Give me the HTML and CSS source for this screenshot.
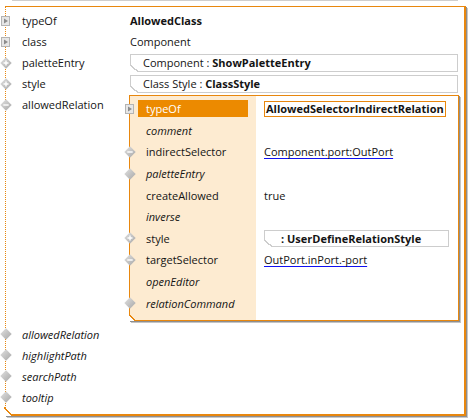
FILE: index.html
```html
<!DOCTYPE html>
<html>
<head>
<meta charset="utf-8">
<link rel="stylesheet" href="styles.css">
</head>
<body>
<svg class="defs" width="0" height="0" aria-hidden="true">
  <defs>
    <linearGradient id="dg" x1="0" y1="0" x2="1" y2="1">
      <stop offset="0" stop-color="#e2e2e2"/>
      <stop offset="1" stop-color="#a6a6a6"/>
    </linearGradient>
    <symbol id="i-arrow" viewBox="0 0 10 10">
      <rect x="0.5" y="0.5" width="8" height="9" fill="#e6e6e6" stroke="#b4b4b4"/>
      <polygon points="3,2.5 7,5 3,7.5" fill="#8c8c8c"/>
    </symbol>
    <symbol id="i-diamond" viewBox="0 0 12 12">
      <polygon points="6,0.3 11.7,6 6,11.7 0.3,6" fill="url(#dg)"/>
    </symbol>
    <symbol id="i-plus" viewBox="0 0 12 12">
      <polygon points="6,0.3 11.7,6 6,11.7 0.3,6" fill="url(#dg)"/>
      <path d="M3.5 6H8.5M6 3.5V8.5" stroke="#fff" stroke-width="1.4"/>
    </symbol>
    <symbol id="i-minus" viewBox="0 0 12 12">
      <polygon points="6,0.3 11.7,6 6,11.7 0.3,6" fill="url(#dg)"/>
      <path d="M3.3 6H8.7" stroke="#fff" stroke-width="1.4"/>
    </symbol>
  </defs>
</svg>

<div class="edge edge-top"></div>

<div class="panel">
  <div class="orow">
    <span class="ico"><svg class="sq"><use href="#i-arrow"/></svg></span>
    <span class="olabel">typeOf</span>
    <span class="ovalue strong">AllowedClass</span>
  </div>
  <div class="orow">
    <span class="ico"><svg class="sq"><use href="#i-arrow"/></svg></span>
    <span class="olabel">class</span>
    <span class="ovalue">Component</span>
  </div>
  <div class="orow">
    <span class="ico"><svg class="dm"><use href="#i-plus"/></svg></span>
    <span class="olabel">paletteEntry</span>
    <span class="ovalue"><span class="refbox">Component : <b>ShowPaletteEntry</b></span></span>
  </div>
  <div class="orow">
    <span class="ico"><svg class="dm"><use href="#i-plus"/></svg></span>
    <span class="olabel">style</span>
    <span class="ovalue"><span class="refbox">Class Style : <b>ClassStyle</b></span></span>
  </div>
  <div class="orow orow-nested">
    <span class="ico"><svg class="dm"><use href="#i-minus"/></svg></span>
    <span class="olabel">allowedRelation</span>
    <div class="ovalue">
      <div class="inner">
        <div class="irow">
          <span class="ico"><svg class="sq"><use href="#i-arrow"/></svg></span>
          <span class="ilabel selected">typeOf</span>
          <span class="ivalue"><span class="typebox">AllowedSelectorIndirectRelation</span></span>
        </div>
        <div class="irow">
          <span class="ico"></span>
          <span class="ilabel empty">comment</span>
          <span class="ivalue"></span>
        </div>
        <div class="irow">
          <span class="ico"><svg class="dm"><use href="#i-minus"/></svg></span>
          <span class="ilabel">indirectSelector</span>
          <span class="ivalue"><span class="link">Component.port:OutPort</span></span>
        </div>
        <div class="irow">
          <span class="ico"><svg class="dm"><use href="#i-diamond"/></svg></span>
          <span class="ilabel empty">paletteEntry</span>
          <span class="ivalue"></span>
        </div>
        <div class="irow">
          <span class="ico"></span>
          <span class="ilabel">createAllowed</span>
          <span class="ivalue">true</span>
        </div>
        <div class="irow">
          <span class="ico"></span>
          <span class="ilabel empty">inverse</span>
          <span class="ivalue"></span>
        </div>
        <div class="irow">
          <span class="ico"><svg class="dm"><use href="#i-plus"/></svg></span>
          <span class="ilabel">style</span>
          <span class="ivalue"><span class="refbox refbox-untyped"><b>:&nbsp;UserDefineRelationStyle</b></span></span>
        </div>
        <div class="irow">
          <span class="ico"><svg class="dm"><use href="#i-minus"/></svg></span>
          <span class="ilabel">targetSelector</span>
          <span class="ivalue"><span class="link">OutPort.inPort.-port</span></span>
        </div>
        <div class="irow">
          <span class="ico"></span>
          <span class="ilabel empty">openEditor</span>
          <span class="ivalue"></span>
        </div>
        <div class="irow">
          <span class="ico"><svg class="dm"><use href="#i-diamond"/></svg></span>
          <span class="ilabel empty">relationCommand</span>
          <span class="ivalue"></span>
        </div>
      </div>
    </div>
  </div>
  <div class="orow">
    <span class="ico"><svg class="dm"><use href="#i-diamond"/></svg></span>
    <span class="olabel empty">allowedRelation</span>
    <span class="ovalue"></span>
  </div>
  <div class="orow">
    <span class="ico"><svg class="dm"><use href="#i-diamond"/></svg></span>
    <span class="olabel empty">highlightPath</span>
    <span class="ovalue"></span>
  </div>
  <div class="orow">
    <span class="ico"><svg class="dm"><use href="#i-diamond"/></svg></span>
    <span class="olabel empty">searchPath</span>
    <span class="ovalue"></span>
  </div>
  <div class="orow">
    <span class="ico"><svg class="dm"><use href="#i-diamond"/></svg></span>
    <span class="olabel empty">tooltip</span>
    <span class="ovalue"></span>
  </div>
</div>

<div class="edge edge-bottom"></div>
</body>
</html>
```

FILE: styles.css
```css
* { box-sizing: border-box; }

html, body {
  margin: 0;
  padding: 0;
  background: #ffffff;
}

body {
  width: 469px;
  height: 420px;
  overflow: hidden;
  font-family: "Open Sans", "Noto Sans", sans-serif;
  font-size: 11px;
  color: #141414;
}

.defs {
  position: absolute;
  width: 0;
  height: 0;
}

.edge {
  height: 1px;
  background: #cfcfcf;
  margin-left: 12px;
  width: 446px;
}

.edge-bottom {
  margin-top: 1px;
  margin-left: 8px;
  width: 452px;
  background: #d6d6d6;
}

/* outer orange frame */
.panel {
  position: relative;
  margin: 5px 0 0 5px;
  width: 461px;
  height: 410px;
  border-top: 1px solid #e8870e;
  border-right: 2px solid #e8870e;
  border-bottom: 2px solid #e8870e;
  border-left: 1px dotted #e8870e;
  box-shadow: 1px 1px 0 #8e8e8e, 2px 2px 0 #c8c8c8;
  padding: 3px 6px 0 0;
}

.panel::before {
  content: "";
  position: absolute;
  left: -2px;
  bottom: -2px;
  width: 9px;
  height: 9px;
  background: linear-gradient(to top right,
    #fff calc(50% - 1px),
    #e8870e calc(50% - 1px),
    #e8870e calc(50% + 0.6px),
    transparent calc(50% + 0.6px));
}

.orow {
  display: flex;
  align-items: center;
  height: 21px;
}

.orow-nested {
  height: auto;
  align-items: flex-start;
  margin-bottom: 3px;
}

.orow-nested > .ico,
.orow-nested > .olabel {
  height: 21px;
  display: flex;
  align-items: center;
}

.ico {
  flex: none;
  width: 12px;
  margin-left: -6px;
  display: flex;
  align-items: center;
  justify-content: center;
}

.ico .sq {
  width: 10px;
  height: 10px;
}

.ico .dm {
  width: 12px;
  height: 12px;
}

.olabel {
  flex: none;
  width: 108px;
  margin-left: 10px;
  white-space: nowrap;
}

.ovalue {
  flex: 1;
  min-width: 0;
  white-space: nowrap;
}

.strong { font-weight: 700; }

.empty { font-style: italic; }

/* reference value box with cut corner */
.refbox {
  position: relative;
  display: block;
  height: 18px;
  line-height: 16px;
  border: 1px solid #cdcdcd;
  padding-left: 12px;
  background: #fff;
}

.refbox b { font-weight: 700; }

.refbox::before {
  content: "";
  position: absolute;
  left: -1px;
  bottom: -1px;
  width: 9px;
  height: 7px;
  background: linear-gradient(to top right,
    #fff calc(50% - 0.8px),
    #cdcdcd calc(50% - 0.8px),
    #cdcdcd calc(50% + 0.6px),
    transparent calc(50% + 0.6px));
}

.refbox-untyped {
  height: 17px;
  line-height: 15px;
  padding-left: 16px;
}

/* nested element box */
.inner {
  position: relative;
  margin: 1px 0 0 -1px;
  width: 330px;
  border: 1px solid #e8870e;
  box-shadow: 1px 1px 0 #8e8e8e, 2px 2px 0 #c4c4c4;
  padding: 2px 0 6px 0;
  background: linear-gradient(to right, #fdebd1 0, #fdebd1 126px, #ffffff 126px);
}

.inner::before {
  content: "";
  position: absolute;
  left: -1px;
  bottom: -1px;
  width: 7px;
  height: 7px;
  background: linear-gradient(to top right,
    #fff calc(50% - 0.8px),
    #e8870e calc(50% - 0.8px),
    #e8870e calc(50% + 0.6px),
    transparent calc(50% + 0.6px));
}

.irow {
  display: flex;
  align-items: center;
  height: 21.6px;
}

.irow .ico {
  margin-left: -6px;
}

.ilabel {
  flex: none;
  width: 110px;
  height: 17px;
  line-height: 17px;
  margin-left: 2px;
  padding-left: 8px;
  white-space: nowrap;
}

.ilabel.selected {
  background: #ec8a00;
  color: #ffffff;
}

.ivalue {
  flex: 1;
  min-width: 0;
  margin-left: 8px;
  padding: 0 9px 0 8px;
  white-space: nowrap;
}

.typebox {
  display: inline-block;
  border: 1px solid #e8870e;
  padding: 0 1px;
  height: 16px;
  line-height: 14px;
  font-weight: 700;
}

.link {
  text-decoration: underline;
  text-decoration-color: #1010f0;
  text-underline-offset: 2px;
}
```
